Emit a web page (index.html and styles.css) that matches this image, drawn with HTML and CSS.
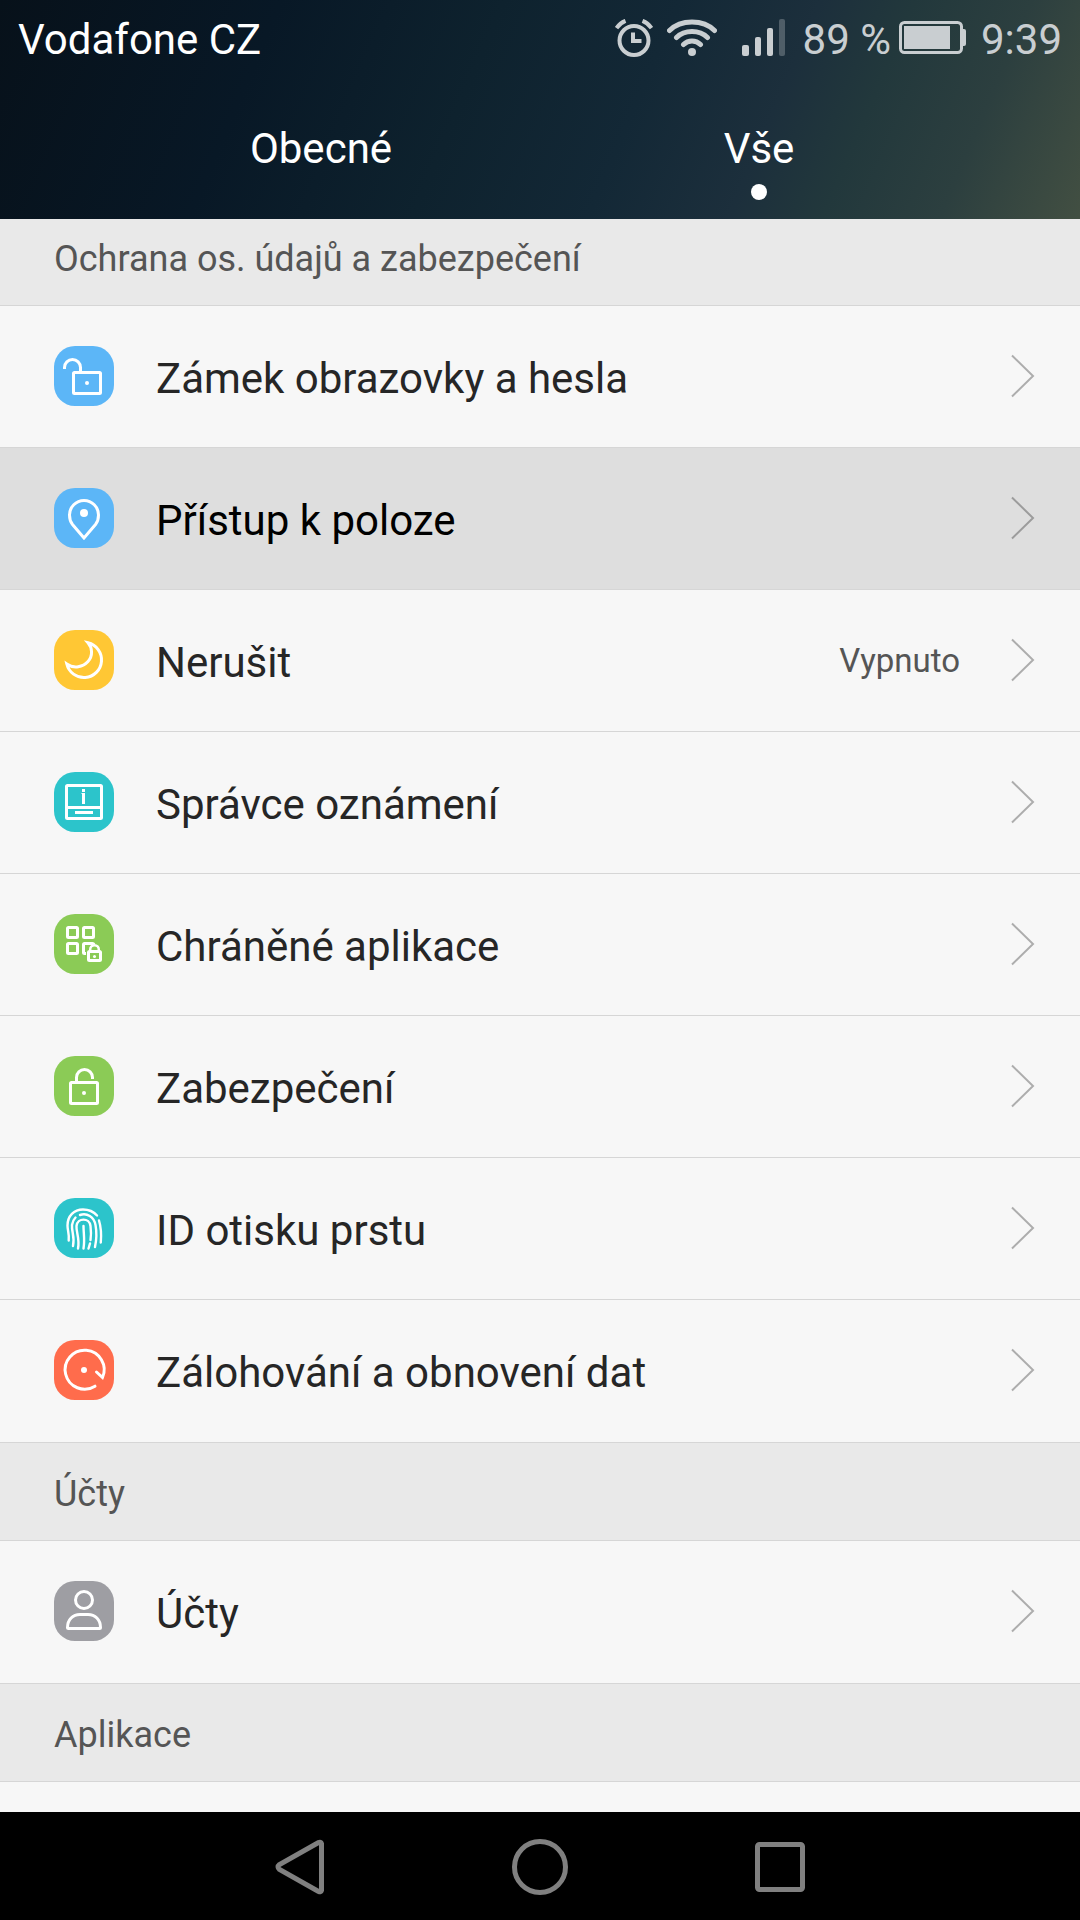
FILE: index.html
```html
<!DOCTYPE html>
<html lang="cs">
<head>
<meta charset="utf-8">
<meta name="viewport" content="width=device-width, initial-scale=1">
<title>Nastavení</title>
<link rel="stylesheet" href="styles.css">
</head>
<body>
<div class="screen">
  <header class="header">
    <div class="status">
      <span class="carrier">Vodafone CZ</span>
      <svg class="status-icon alarm" width="38" height="38" viewBox="0 0 38 38" fill="none" stroke="currentColor" stroke-width="4">
        <circle cx="19" cy="21.500" r="14.500"/><path d="M18 13.500V22h8.500M1.500 9Q5 4 10.500 1.800M36.500 9Q33 4 27.500 1.800"/>
      </svg>
      <svg class="status-icon wifi" width="50" height="38" viewBox="0 0 50 38" fill="none" stroke="currentColor" stroke-width="5" stroke-linecap="round">
        <path d="M2.500 11.500Q11 3 25 3T47.500 11.500M9.500 18.500Q15.500 12.500 25 12.500T40.500 18.500M16.500 25.500Q20 22 25 22T33.500 25.500"/><circle cx="25" cy="33" r="4" fill="currentColor" stroke="none"/>
      </svg>
      <svg class="status-icon signal" width="44" height="38" viewBox="0 0 44 38" fill="currentColor">
        <rect x="1" y="26" width="7" height="11" rx="2"/><rect x="14" y="18" width="6" height="19" rx="2"/><rect x="26" y="9" width="6" height="28" rx="2"/><rect x="38" y="0" width="6" height="37" rx="2" opacity=".3"/>
      </svg>
      <span class="percent">89 %</span>
      <svg class="status-icon battery" width="68" height="34" viewBox="0 0 68 34" fill="none" stroke="currentColor" stroke-width="3">
        <rect x="1.500" y="1.500" width="61" height="30" rx="4"/><rect x="5" y="5" width="46" height="23" fill="currentColor" stroke="none"/><path d="M64 8h1q2 0 2 2v13q0 2-2 2h-1z" fill="currentColor" stroke="none"/>
      </svg>
      <time class="clock">9:39</time>
    </div>
    <nav class="tabs">
      <a class="tab" href="#general">Obecné</a>
      <a class="tab tab-active" href="#all" aria-current="page">Vše</a>
    </nav>
  </header>

  <main class="settings">
    <h2 class="section section-first">Ochrana os. údajů a zabezpečení</h2>
    <ul class="list">
      <li><a class="row" href="#lock">
        <svg class="icon blue" viewBox="0 0 60 60"><rect x="19.500" y="26.500" width="27" height="21" rx="1"/><path d="M10.500 23v-1.500a8 8 0 0 1 16 0V26"/><circle class="solid" cx="33" cy="37" r="2"/></svg>
        <span class="label">Zámek obrazovky a hesla</span>
        <svg class="chevron" viewBox="0 0 24 44"><path d="M1 1.500L22 22 1 42.500"/></svg>
      </a></li>
      <li><a class="row row-pressed" href="#location">
        <svg class="icon blue" viewBox="0 0 60 60"><path d="M30 50L18.500 36.500C16.500 34 15.500 31 15.500 27a14.500 14.500 0 0 1 29 0c0 4-1 7-3 9.500Z"/><circle class="solid" cx="30" cy="25" r="4"/></svg>
        <span class="label">Přístup k poloze</span>
        <svg class="chevron" viewBox="0 0 24 44"><path d="M1 1.500L22 22 1 42.500"/></svg>
      </a></li>
      <li><a class="row" href="#dnd">
        <svg class="icon yellow" viewBox="0 0 60 60"><path d="M34 12.800A17.600 17.600 0 1 1 12.800 34C20 39 29 37 34 31.500C39 26 38.500 18 34 12.800Z"/></svg>
        <span class="label">Nerušit</span>
        <span class="value">Vypnuto</span>
        <svg class="chevron" viewBox="0 0 24 44"><path d="M1 1.500L22 22 1 42.500"/></svg>
      </a></li>
      <li><a class="row" href="#notifications">
        <svg class="icon teal" viewBox="0 0 60 60"><rect x="12.500" y="13.500" width="35" height="33" rx="1"/><path d="M12.500 35.500h35M21 40.500h18M29.500 21v11M29.500 17v3"/><path stroke-width="1" d="M27.500 21.500h2"/></svg>
        <span class="label">Správce oznámení</span>
        <svg class="chevron" viewBox="0 0 24 44"><path d="M1 1.500L22 22 1 42.500"/></svg>
      </a></li>
      <li><a class="row" href="#protected">
        <svg class="icon green" viewBox="0 0 60 60"><rect x="13.500" y="13.500" width="10" height="10" rx="1"/><rect x="29.500" y="13.500" width="10" height="10" rx="1"/><rect x="13.500" y="29.500" width="10" height="10" rx="1"/><path d="M32 39.500h-1.500q-1 0-1-1v-8q0-1 1-1h8q1 0 1.500 1"/><path stroke-width="2.500" d="M36.200 37v-1.500a4.300 4.300 0 0 1 8.600 0V37"/><rect x="34.500" y="37.500" width="12" height="9" rx="1"/><circle class="solid" cx="40.500" cy="42.500" r="1.500"/></svg>
        <span class="label">Chráněné aplikace</span>
        <svg class="chevron" viewBox="0 0 24 44"><path d="M1 1.500L22 22 1 42.500"/></svg>
      </a></li>
      <li><a class="row" href="#security">
        <svg class="icon green" viewBox="0 0 60 60"><rect x="16.500" y="26.500" width="27" height="21" rx="1"/><path d="M22.500 26v-4.500a8 8 0 0 1 16 0V23"/><circle class="solid" cx="30" cy="37" r="2"/></svg>
        <span class="label">Zabezpečení</span>
        <svg class="chevron" viewBox="0 0 24 44"><path d="M1 1.500L22 22 1 42.500"/></svg>
      </a></li>
      <li><a class="row" href="#fingerprint">
        <svg class="icon teal" viewBox="0 0 60 60"><g stroke-width="2.400" stroke-linecap="round"><path d="M14.700 42.500C15.500 36 13.500 33 13.500 27.500C13.500 18 20 11.500 29 11.500C35 11.500 39.500 13.500 43 17.500M45 22.500C47 29 47.500 36 46.800 44.500"/><path d="M19 48C21 39 17.500 34 18 27Q18.500 22.500 21.500 19.500M26 17C33 14.500 40 19 41.500 27C43 35 42.500 42 41 49"/><path d="M24 50.500C26 41 22 34 22.500 28C23.500 19.500 35.500 19.500 36.500 28Q37.500 36 36.500 42M36 45.500L34.500 50.500"/><path d="M29.500 50.500C31 42 29.500 35 29.500 28"/></g></svg>
        <span class="label">ID otisku prstu</span>
        <svg class="chevron" viewBox="0 0 24 44"><path d="M1 1.500L22 22 1 42.500"/></svg>
      </a></li>
      <li><a class="row" href="#backup">
        <svg class="icon coral" viewBox="0 0 60 60"><path stroke-linecap="round" d="M41 46.200A19.500 19.500 0 1 1 48.500 37.500L42.500 32"/><circle class="solid" cx="30" cy="30" r="3"/></svg>
        <span class="label">Zálohování a obnovení dat</span>
        <svg class="chevron" viewBox="0 0 24 44"><path d="M1 1.500L22 22 1 42.500"/></svg>
      </a></li>
    </ul>
    <h2 class="section">Účty</h2>
    <ul class="list">
      <li><a class="row" href="#accounts">
        <svg class="icon gray" viewBox="0 0 60 60"><circle cx="30" cy="19" r="8.500"/><path d="M14.500 47.500q-1 0-1-1C13.500 38.500 19 33.500 26 33.500h8c7 0 12.500 5 12.500 13q0 1-1 1z"/></svg>
        <span class="label">Účty</span>
        <svg class="chevron" viewBox="0 0 24 44"><path d="M1 1.500L22 22 1 42.500"/></svg>
      </a></li>
    </ul>
    <h2 class="section">Aplikace</h2>
  </main>

  <footer class="navbar">
    <button class="nav-button" type="button" aria-label="Zpět"><svg width="60" height="60" viewBox="0 0 60 60"><path d="M51.500 6.500v47q-.5 2-3 1L9.500 32.500q-3-2.500 0-5L48.500 5.500q2.500-1 3 1z"/></svg></button>
    <button class="nav-button" type="button" aria-label="Domů"><svg width="60" height="60" viewBox="0 0 60 60"><circle cx="30" cy="30" r="25.500"/></svg></button>
    <button class="nav-button" type="button" aria-label="Poslední aplikace"><svg width="60" height="60" viewBox="0 0 60 60"><rect x="7.500" y="7.500" width="45" height="45" rx="2"/></svg></button>
  </footer>
</div>
</body>
</html>
```
FILE: styles.css
```css
* {
  box-sizing: border-box;
}

body {
  margin: 0;
  font-family: Roboto, "Noto Sans", sans-serif;
  background: #f7f7f7;
}

a {
  color: inherit;
  text-decoration: none;
}

.screen {
  display: flex;
  flex-direction: column;
  min-height: 100vh;
}

.header {
  color: #fff;
  background: linear-gradient(113deg, #07111a 0%, #081826 24%, #0e222e 43%, #132836 58%, #1c2f3c 70%, #22383c 78%, #2c3f3f 88%, #424f42 100%);
}

.status {
  display: flex;
  align-items: center;
  height: 76px;
  padding: 0 18px;
  font-size: 42px;
  line-height: 50px;
}

.carrier,
.percent,
.clock {
  padding-top: 4px;
}

.carrier {
  flex: 1;
}

.status-icon,
.percent,
.clock {
  flex: none;
  color: #c9ced1;
}

.battery {
  margin-left: 8px;
}

.wifi {
  margin-left: 14px;
}

.signal {
  margin-left: 24px;
}

.percent {
  margin-left: 18px;
}

.clock {
  margin-left: 14px;
}

.tabs {
  display: grid;
  grid-template-columns: 1fr 1fr;
  height: 143px;
  padding: 0 102px;
}

.tab {
  display: flex;
  flex-direction: column;
  align-items: center;
  gap: 10px;
  padding-top: 48px;
  font-size: 42px;
  line-height: 50px;
}

.tab-active::after {
  content: "";
  width: 16px;
  height: 16px;
  border-radius: 50%;
  background: #fff;
}

.settings {
  flex: 1;
}

.section {
  margin: 0;
  padding: 30px 54px 25px;
  border: solid #d6d6d6;
  border-width: 1px 0;
  background: #e9e9e9;
  color: #555;
  font-size: 36px;
  font-weight: 400;
  line-height: 42px;
}

.section-first {
  padding-top: 19px;
  border-top: 0;
}

.list {
  margin: 0;
  padding: 0;
  list-style: none;
}

.list li + li {
  border-top: 1px solid #d6d6d6;
}

.row {
  display: flex;
  align-items: center;
  min-height: 141px;
  padding: 0 45px 1px 54px;
  color: #262626;
}

.list li:last-child .row {
  min-height: 142px;
  padding-bottom: 2px;
}

.row-pressed {
  background: #dedede;
  color: #000;
}

.icon {
  flex: none;
  width: 60px;
  height: 60px;
  border-radius: 21px;
  fill: none;
  stroke: #fff;
  stroke-width: 3;
}

.icon .solid {
  fill: #fff;
  stroke: none;
}

.blue {
  background: #5cb6f7;
}

.yellow {
  background: #ffc734;
}

.teal {
  background: #2cc4cb;
}

.green {
  background: #8bcb56;
}

.coral {
  background: #ff6c4c;
}

.gray {
  background: #9e9ea3;
}

.label {
  flex: 1;
  padding-top: 6px;
  margin-left: 42px;
  font-size: 42px;
  line-height: 50px;
}

.value {
  padding-top: 2px;
  color: #555;
  font-size: 33px;
  line-height: 40px;
}

.chevron {
  flex: none;
  width: 24px;
  height: 44px;
  margin-left: 51px;
  fill: none;
  stroke: #adadad;
  stroke-width: 2;
}

.row-pressed .chevron {
  stroke: #9c9c9c;
}

.navbar {
  display: flex;
  justify-content: center;
  height: 108px;
  background: #000;
}

.nav-button {
  display: grid;
  place-items: center;
  width: 240px;
  padding: 2px 0 0;
  border: 0;
  background: none;
}

.nav-button svg {
  fill: none;
  stroke: #808080;
  stroke-width: 5;
}
```
